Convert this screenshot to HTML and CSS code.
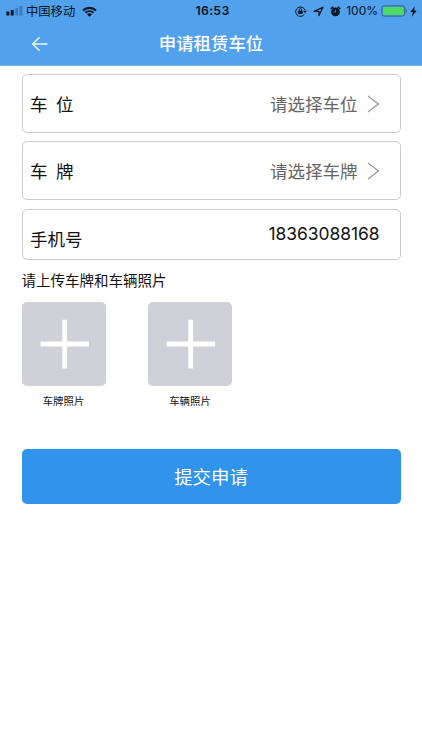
FILE: index.html
```html
<!DOCTYPE html>
<html lang="zh-CN">
<head>
<meta charset="utf-8">
<title>申请租赁车位</title>
<link rel="stylesheet" href="styles.css">
</head>
<body>
<header class="header">
  <div class="status">
    <div class="status-left">
      <svg class="signal" width="17" height="10" viewBox="0 0 17 10"><rect x="0.3" y="5.5" width="3" height="4" rx=".6"/><rect x="4.7" y="4" width="3" height="5.5" rx=".6"/><rect x="9.1" y="2" width="3" height="7.5" rx=".6" opacity=".25"/><rect x="13.4" y="0" width="3" height="9.5" rx=".6" opacity=".25"/></svg>
      <span class="carrier">中国移动</span>
      <svg class="wifi" width="15" height="11" viewBox="0 0 15 11"><path d="M.3 3.7a10.4 10.4 0 0 1 14.4 0L13.2 5.2a8.2 8.2 0 0 0-11.4 0zM2.8 6.1a6.8 6.8 0 0 1 9.4 0L10.7 7.6a4.7 4.7 0 0 0-6.4 0zM5.1 8.4a3.5 3.5 0 0 1 4.8 0L7.5 10.8z"/></svg>
    </div>
    <span class="clock">16:53</span>
    <div class="status-right">
      <svg class="lock" width="12" height="11" viewBox="0 0 12 11"><path d="M9.3 8.4A4.7 4.7 0 1 1 9.9 4.2" fill="none" stroke="#071421" stroke-width="1"/><path d="M8.2 4.8h3.6L10 7.3z"/><rect x="3.1" y="4.8" width="4.6" height="3.2" rx=".4"/><path d="M4.2 5V3.8a1.2 1.2 0 0 1 2.4 0V5" fill="none" stroke="#071421" stroke-width=".9"/></svg>
      <svg class="locate" width="11" height="11" viewBox="0 0 11 11"><path d="M9.9 1.2 6 9.6V5.4H1.2z" fill="none" stroke="#071421" stroke-width="1.2" stroke-linejoin="round"/></svg>
      <svg class="alarm" width="11" height="11" viewBox="0 0 11 11"><circle cx="5.5" cy="5.9" r="4.4"/><path d="M1.2 2.5 2.8 1.2M9.8 2.5 8.2 1.2" stroke="#071421" stroke-width="1.6" stroke-linecap="round"/><path d="M5.7 3.6v2.5H3.7" fill="none" stroke="#51a1ed" stroke-width=".8"/></svg>
      <span class="percent">100%</span>
      <svg class="battery" width="27" height="12" viewBox="0 0 27 12"><rect x=".9" y=".9" width="22.8" height="10.2" rx="2.4" fill="none" stroke="#2b5984" stroke-width=".9"/><rect x="2" y="2" width="20.6" height="8" rx="1.2" fill="#4cd964"/><path d="M24.9 4.2q2 1.8 0 3.6z" fill="#2b5984"/></svg>
      <svg class="bolt" width="7" height="11" viewBox="0 0 7 11"><path d="M4.8.3.3 6.1h2.5L1.8 10.7 6.8 4.6H4.1z"/></svg>
    </div>
  </div>
  <div class="navbar">
    <svg class="back" width="18" height="16" viewBox="0 0 18 16"><path d="M8.5 1.2 1.8 8l6.7 6.8M1.8 8H16.5" fill="none" stroke="#e6f4ff" stroke-width="1.6"/></svg>
    <h1 class="title">申请租赁车位</h1>
  </div>
</header>
<main class="form">
  <div class="field">
    <span class="label"><span>车</span><span>位</span></span>
    <span class="choice">请选择车位</span>
    <svg class="chevron" width="13" height="18" viewBox="0 0 13 18"><path d="M1 1 11.4 9 1 17" fill="none" stroke="#999" stroke-width="1.3"/></svg>
  </div>
  <div class="field">
    <span class="label"><span>车</span><span>牌</span></span>
    <span class="choice">请选择车牌</span>
    <svg class="chevron" width="13" height="18" viewBox="0 0 13 18"><path d="M1 1 11.4 9 1 17" fill="none" stroke="#999" stroke-width="1.3"/></svg>
  </div>
  <div class="field field-phone">
    <span class="label">手机号</span>
    <span class="phone">18363088168</span>
  </div>
  <p class="hint">请上传车牌和车辆照片</p>
  <div class="uploads">
    <div class="upload">
      <svg class="tile" width="84" height="84" viewBox="0 0 84 84"><rect width="84" height="84" rx="5" fill="#d0d0d9"/><path d="M18.5 42h48.5M42.7 17.7v48.8" stroke="#fff" stroke-width="4.8"/></svg>
      <span class="caption">车牌照片</span>
    </div>
    <div class="upload">
      <svg class="tile" width="84" height="84" viewBox="0 0 84 84"><rect width="84" height="84" rx="5" fill="#d0d0d9"/><path d="M18.5 42h48.5M42.7 17.7v48.8" stroke="#fff" stroke-width="4.8"/></svg>
      <span class="caption">车辆照片</span>
    </div>
  </div>
  <button class="submit" type="button">提交申请</button>
</main>
</body>
</html>
```
FILE: styles.css
```css
* { box-sizing: border-box; }
body {
  margin: 0;
  background: #fff;
  color: #111;
  font-family: Inter, "Noto Sans CJK SC", sans-serif;
}
svg { display: block; flex: none; }
.header {
  height: 66px;
  background: #51a1ed;
  border-bottom: 1px solid #78b3e9;
}
.status {
  display: grid;
  grid-template-columns: 1fr auto 1fr;
  align-items: center;
  height: 22px;
  padding: 0 5px 0 6px;
  color: #071421;
  fill: #071421;
  font-size: 12px;
  line-height: 22px;
}
.status-left, .status-right { display: flex; align-items: center; height: 22px; }
.status-right { justify-content: flex-end; }
.carrier { margin-left: 3px; padding-top: 2px; font-size: 12.3px; line-height: 20px; }
.wifi { margin-left: 7px; }
.clock { padding-left: 2px; font-size: 12.3px; font-weight: 600; letter-spacing: .3px; }
.locate { margin-left: 6px; }
.alarm { margin-left: 6px; }
.percent { margin-left: 5px; font-size: 12px; }
.battery { margin-left: 3px; }
.bolt { margin-left: 2px; }
.navbar {
  display: grid;
  grid-template-columns: 32px 1fr 32px;
  align-items: center;
  height: 42px;
  padding: 0 31px;
}
.title {
  margin: 0;
  color: #fff;
  font-size: 17.4px;
  font-weight: 500;
  line-height: 43px;
  text-align: center;
}
.form { padding: 8px 21.5px 0; }
.field {
  display: flex;
  align-items: center;
  height: 59px;
  margin-bottom: 8.4px;
  padding: 0 20px 0 7.5px;
  border: 1px solid #ccc;
  border-radius: 5px;
  font-size: 17.5px;
  line-height: 26px;
}
.label { display: flex; gap: 8.5px; margin-right: auto; padding-top: 2px; }
.choice { padding-top: 2px; color: #666; }
.chevron { margin-left: 9px; }
.field-phone { height: 51px; margin-bottom: 0; }
.field-phone .label { padding-top: 11px; }
.phone { font-size: 17.4px; letter-spacing: -.02px; }
.hint { margin: 9px 0; font-size: 14.5px; line-height: 24px; }
.uploads { display: flex; gap: 42.5px; }
.upload { display: flex; flex-direction: column; align-items: center; }
.caption { margin-top: 8px; font-size: 10.4px; line-height: 16px; }
.submit {
  display: block;
  width: 100%;
  height: 55px;
  margin-top: 39px;
  padding: 1px 0 0;
  border: 0;
  border-radius: 5px;
  background: #3193eb;
  color: #fff;
  font: 18.4px/54px Inter, "Noto Sans CJK SC", sans-serif;
}
```
